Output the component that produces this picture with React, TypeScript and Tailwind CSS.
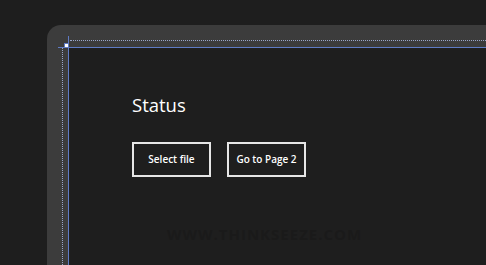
export default function App() {
  return (
    <div className="h-[265px] w-[486px] overflow-hidden bg-[#1e1e1e] pl-[47px] pt-[25px] font-['Open_Sans',sans-serif]">
      <div className="relative h-full w-full rounded-tl-[14px] bg-[#3c3c3c] pl-[22px] pt-[23px]">
        {/* design guides */}
        <div className="absolute left-[21px] top-[11px] bottom-0 w-px bg-[#5f7bc4]" />
        <div className="absolute left-[11px] right-0 top-[22px] h-px bg-[#5f7bc4]" />
        <div className="absolute left-[23px] right-0 top-[15px] h-px border-t border-dotted border-[#9aa6c8]" />
        <div className="absolute left-[15px] top-[23px] bottom-0 w-px border-l border-dotted border-[#9aa6c8]" />
        <div className="absolute left-[17px] top-[18px] h-[5px] w-[5px] border border-[#5f7bc4] bg-white" />

        <div className="flex h-full w-full flex-col items-start bg-[#1e1e1e] pl-[63px] pt-[44px]">
          <h1 className="text-[18.5px] leading-[26px] text-white">Status</h1>
          <div className="mt-[24px] flex gap-[16px]">
            <button className="flex h-[35px] w-[79px] items-center justify-center border-2 border-[#e6e6e6] text-[10px] font-semibold text-white">
              Select file
            </button>
            <button className="flex h-[35px] w-[79px] items-center justify-center border-2 border-[#e6e6e6] text-[10px] font-semibold text-white">
              Go to Page 2
            </button>
          </div>
          <div className="mt-[46px] pl-[35px] text-[15px] font-bold tracking-[1px] text-[#1a1a1a]">
            WWW.THINKSEEZE.COM
          </div>
        </div>
      </div>
    </div>
  );
}
